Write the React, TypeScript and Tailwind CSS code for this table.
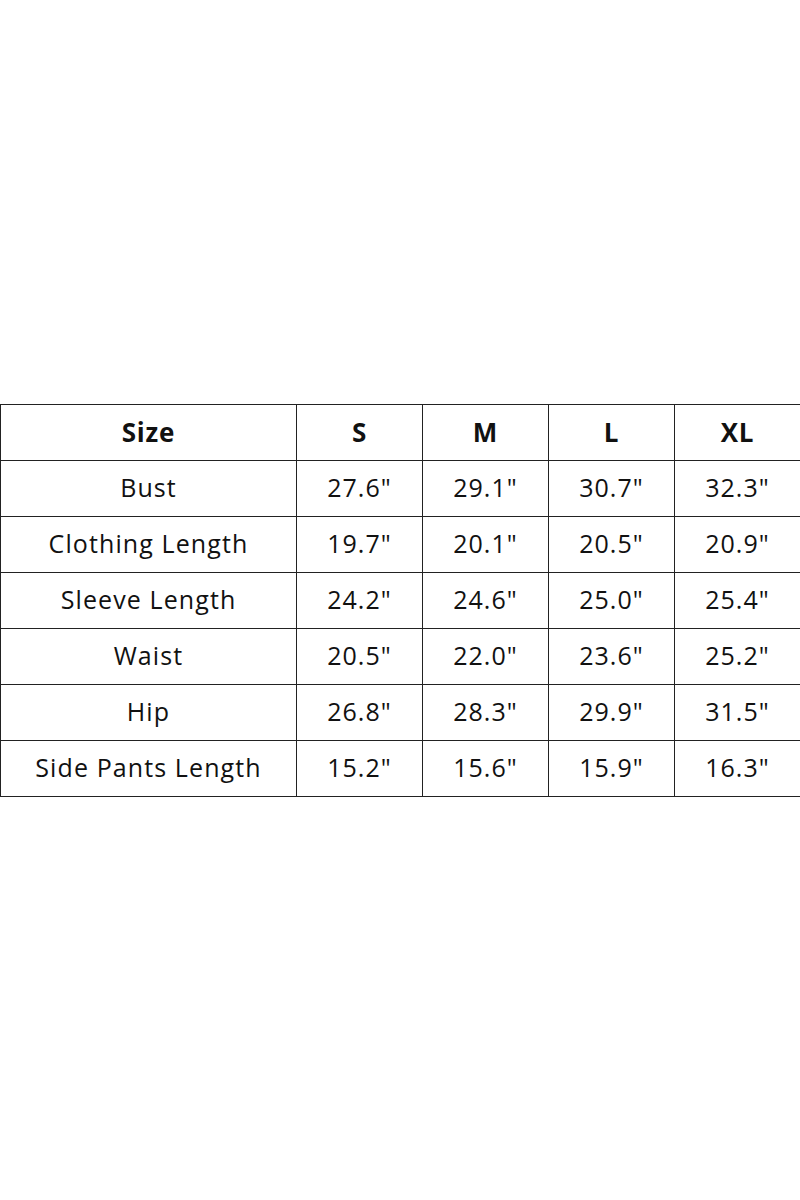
import React from "react";

const sizes = ["S", "M", "L", "XL"];

const rows: [string, string[]][] = [
  ["Bust", ["27.6\"", "29.1\"", "30.7\"", "32.3\""]],
  ["Clothing Length", ["19.7\"", "20.1\"", "20.5\"", "20.9\""]],
  ["Sleeve Length", ["24.2\"", "24.6\"", "25.0\"", "25.4\""]],
  ["Waist", ["20.5\"", "22.0\"", "23.6\"", "25.2\""]],
  ["Hip", ["26.8\"", "28.3\"", "29.9\"", "31.5\""]],
  ["Side Pants Length", ["15.2\"", "15.6\"", "15.9\"", "16.3\""]],
];

export default function App() {
  return (
    <div className="flex min-h-[1200px] w-[800px] items-center bg-white font-['Open_Sans','Noto_Sans',sans-serif] text-[#111]">
      <table className="w-[800px] table-fixed border-collapse border-[1.5px] border-[#222]">
        <colgroup>
          <col className="w-[296px]" />
          <col className="w-[126px]" />
          <col className="w-[126px]" />
          <col className="w-[126px]" />
          <col className="w-[126px]" />
        </colgroup>
        <thead>
          <tr className="h-[56px]">
            <th className="border border-[#222] p-0 text-center text-[26px] font-bold tracking-[0.8px]">Size</th>
            {sizes.map((s) => (
              <th key={s} className="border border-[#222] p-0 text-center text-[26px] font-bold tracking-[0.8px]">
                {s}
              </th>
            ))}
          </tr>
        </thead>
        <tbody>
          {rows.map(([name, vals]) => (
            <tr key={name} className="h-[56px]">
              <td className="border border-[#222] p-0 text-center text-[25px] tracking-[1.1px]">{name}</td>
              {vals.map((v, i) => (
                <td key={i} className="border border-[#222] p-0 text-center text-[25px] tracking-[1px]">
                  {v}
                </td>
              ))}
            </tr>
          ))}
        </tbody>
      </table>
    </div>
  );
}
